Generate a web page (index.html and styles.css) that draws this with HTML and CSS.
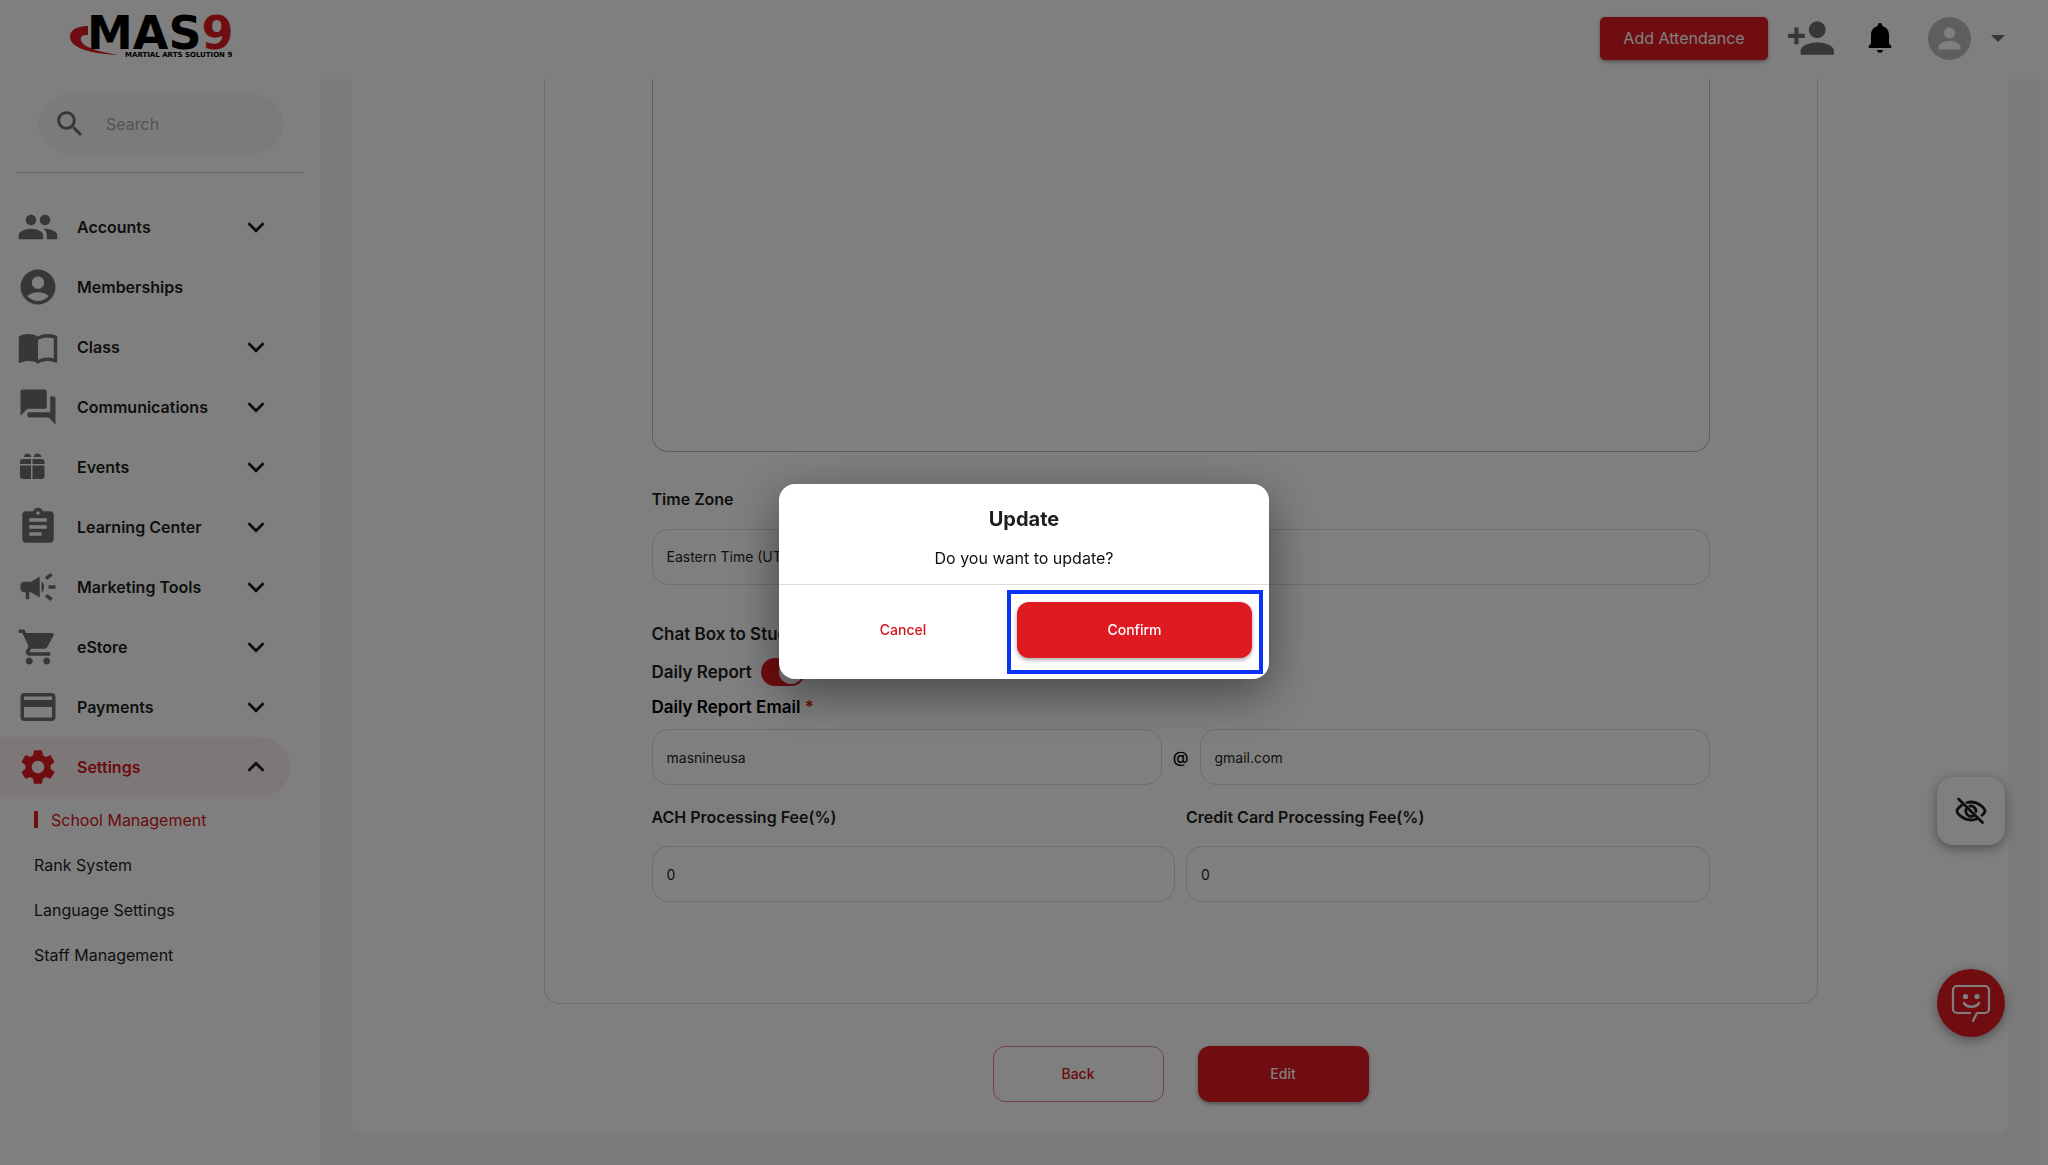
FILE: index.html
```html
<!DOCTYPE html>
<html lang="en">
<head>
<meta charset="utf-8">
<title>MAS9 – School Management</title>
<link rel="stylesheet" href="styles.css">
</head>
<body>
<header class="topbar">
  <a class="logo" href="#" aria-label="MAS9 home">
    <svg width="172" height="46" viewBox="0 0 172 46">
      <path class="logo-red" d="M21 11 C8 11 3 16 3 22 C3 32 22 39 52 40 C32 37 15 32 14 25 C13 21 16 20 21 20 Z"/>
      <text class="logo-word" x="20" y="34">MAS<tspan class="logo-red">9</tspan></text>
      <text class="logo-tag" x="58" y="42">MARTIAL ARTS SOLUTION 9</text>
    </svg>
  </a>
  <div class="actions">
    <button class="btn btn-attend" type="button">Add Attendance</button>
    <button class="icon-btn add-person" type="button" aria-label="Add person">
      <svg width="50" height="50" viewBox="0 0 24 24"><path d="M15 12c2.210 0 4-1.790 4-4s-1.790-4-4-4-4 1.790-4 4 1.790 4 4 4zm-9-2V7H4v3H1v2h3v3h2v-3h3v-2H6zm9 4c-2.670 0-8 1.340-8 4v2h16v-2c0-2.660-5.330-4-8-4z"/></svg>
    </button>
    <button class="icon-btn bell" type="button" aria-label="Notifications">
      <svg width="24" height="30" viewBox="0 0 24 30"><path d="M12 0a2.200 2.200 0 0 1 2.200 2.200v.8C18.500 4 21 7.500 21 12v7.500c0 1 .4 1.700 1.300 2.500.8.700 1.200 1.100 1.200 1.700 0 .8-.6 1.300-1.300 1.300H1.800C1.100 25 .5 24.500.5 23.700c0-.6.4-1 1.200-1.700C2.600 21.200 3 20.500 3 19.500V12c0-4.500 2.500-8 6.800-9v-.8A2.200 2.200 0 0 1 12 0zM9 27h6c0 1.600-1.300 2.700-3 2.700S9 28.600 9 27z"/></svg>
    </button>
    <button class="icon-btn account" type="button" aria-label="Account">
      <svg width="43" height="43" viewBox="0 0 43 43"><circle cx="21.500" cy="21.500" r="21.500" fill="#bdbdbd"/><circle cx="21.500" cy="16" r="5.500" fill="#fff"/><path d="M10.500 32.500v-2.700c0-4 7-5.800 11-5.800s11 1.800 11 5.800v2.700z" fill="#fff"/></svg>
      <svg width="14" height="7" viewBox="0 0 14 7"><path d="M0 0h14L7 7z"/></svg>
    </button>
  </div>
</header>

<nav class="sidebar">
  <label class="search">
    <svg width="34" height="34" viewBox="0 0 24 24"><path d="M15.500 14h-.79l-.28-.27C15.410 12.590 16 11.110 16 9.500 16 5.910 13.090 3 9.500 3S3 5.910 3 9.500 5.910 16 9.500 16c1.610 0 3.090-.59 4.230-1.570l.27.28v.79l5 4.990L20.490 19l-4.990-5zm-6 0C7.010 14 5 11.990 5 9.500S7.010 5 9.500 5 14 7.010 14 9.500 11.990 14 9.500 14z"/></svg>
    <input type="search" placeholder="Search" aria-label="Search">
  </label>
  <hr class="rule">
  <ul class="menu">
    <li><a class="item" href="#"><svg class="ico" viewBox="0 0 24 24"><path d="M16 11c1.660 0 2.990-1.340 2.990-3S17.660 5 16 5s-3 1.340-3 3 1.340 3 3 3zm-8 0c1.660 0 2.990-1.340 2.990-3S9.660 5 8 5 5 6.340 5 8s1.340 3 3 3zm0 2c-2.330 0-7 1.170-7 3.500V19h14v-2.500c0-2.330-4.670-3.500-7-3.500zm8 0c-.29 0-.62.020-.97.050 1.160.84 1.970 1.970 1.970 3.450V19h6v-2.500c0-2.330-4.670-3.500-7-3.500z"/></svg><span>Accounts</span><svg class="chev" viewBox="0 0 24 24"><path d="M16.590 8.590 12 13.170 7.410 8.590 6 10l6 6 6-6z"/></svg></a></li>
    <li><a class="item" href="#"><svg class="ico" viewBox="0 0 24 24"><path d="M12 2C6.480 2 2 6.480 2 12s4.480 10 10 10 10-4.480 10-10S17.520 2 12 2zm0 4c1.930 0 3.500 1.570 3.500 3.500S13.930 13 12 13s-3.500-1.570-3.500-3.500S10.070 6 12 6zm0 14c-2.030 0-4.430-.82-6.140-2.880C7.550 15.800 9.680 15 12 15s4.450.8 6.140 2.120C16.430 19.180 14.030 20 12 20z"/></svg><span>Memberships</span></a></li>
    <li><a class="item" href="#"><svg class="ico" viewBox="0 0 24 24"><path d="M21 5c-1.110-.35-2.330-.5-3.500-.5-1.950 0-4.050.4-5.500 1.500-1.450-1.100-3.550-1.500-5.500-1.500S2.450 4.900 1 6v14.650c0 .25.25.5.5.5.1 0 .15-.05.25-.05C3.100 20.450 5.050 20 6.500 20c1.950 0 4.050.4 5.500 1.500 1.350-.85 3.800-1.500 5.500-1.500 1.650 0 3.350.3 4.750 1.050.1.050.15.050.25.050.25 0 .5-.25.5-.5V6c-.6-.45-1.250-.75-2-1zm0 13.500c-1.100-.35-2.300-.5-3.500-.5-1.700 0-4.150.65-5.500 1.500V8c1.350-.85 3.800-1.500 5.500-1.500 1.200 0 2.400.15 3.500.5v11.500z"/></svg><span>Class</span><svg class="chev" viewBox="0 0 24 24"><path d="M16.590 8.590 12 13.170 7.410 8.590 6 10l6 6 6-6z"/></svg></a></li>
    <li><a class="item" href="#"><svg class="ico" viewBox="0 0 24 24"><path d="M21 6h-2v9H6v2c0 .55.45 1 1 1h11l4 4V7c0-.55-.45-1-1-1zm-4 6V3c0-.55-.45-1-1-1H3c-.55 0-1 .45-1 1v14l4-4h10c.55 0 1-.45 1-1z"/></svg><span>Communications</span><svg class="chev" viewBox="0 0 24 24"><path d="M16.590 8.590 12 13.170 7.410 8.590 6 10l6 6 6-6z"/></svg></a></li>
    <li><a class="item" href="#"><svg class="ico" viewBox="0 0 42 42"><path d="M3 18v-2a3 3 0 0 1 3-3h8v5zM15.500 18v-5h9a3 3 0 0 1 3 3v2zM3 19.500h11V33H6a3 3 0 0 1-3-3zM15.500 19.500h12V30a3 3 0 0 1-3 3h-9zM7 11c0-2 1.500-3.500 3.500-3.500S14 9 14.500 11zM16.500 11c.5-2 2-3.500 4-3.500S24 9 24.500 11z"/></svg><span>Events</span><svg class="chev" viewBox="0 0 24 24"><path d="M16.590 8.590 12 13.170 7.410 8.590 6 10l6 6 6-6z"/></svg></a></li>
    <li><a class="item" href="#"><svg class="ico" viewBox="0 0 24 24"><path d="M19 3h-4.180C14.400 1.840 13.300 1 12 1c-1.300 0-2.400.84-2.820 2H5c-1.100 0-2 .9-2 2v14c0 1.100.9 2 2 2h14c1.100 0 2-.9 2-2V5c0-1.100-.9-2-2-2zm-7 0c.55 0 1 .45 1 1s-.45 1-1 1-1-.45-1-1 .45-1 1-1zm2 14H7v-2h7v2zm3-4H7v-2h10v2zm0-4H7V7h10v2z"/></svg><span>Learning Center</span><svg class="chev" viewBox="0 0 24 24"><path d="M16.590 8.590 12 13.170 7.410 8.590 6 10l6 6 6-6z"/></svg></a></li>
    <li><a class="item" href="#"><svg class="ico" viewBox="0 0 24 24"><path d="M18 11v2h4v-2h-4zm-2 6.610c.96.710 2.210 1.650 3.200 2.390.4-.53.8-1.070 1.200-1.600-.99-.74-2.240-1.680-3.200-2.400-.4.540-.8 1.080-1.200 1.610zM20.400 5.600c-.4-.53-.8-1.070-1.200-1.600-.99.740-2.240 1.680-3.200 2.400.4.530.8 1.070 1.200 1.600.96-.72 2.210-1.650 3.200-2.400zM4 9c-1.100 0-2 .9-2 2v2c0 1.100.9 2 2 2h1v4h2v-4h1l5 3V6L8 9H4zm11.500 3c0-1.330-.58-2.530-1.500-3.350v6.690c.92-.81 1.500-2.010 1.500-3.340z"/></svg><span>Marketing Tools</span><svg class="chev" viewBox="0 0 24 24"><path d="M16.590 8.590 12 13.170 7.410 8.590 6 10l6 6 6-6z"/></svg></a></li>
    <li><a class="item" href="#"><svg class="ico" viewBox="0 0 24 24"><path d="M7 18c-1.100 0-1.990.9-1.990 2S5.900 22 7 22s2-.9 2-2-.9-2-2-2zM1 2v2h2l3.600 7.590-1.350 2.450c-.16.280-.25.610-.25.960 0 1.100.9 2 2 2h12v-2H7.420c-.14 0-.25-.11-.25-.25l.03-.12.9-1.630h7.450c.75 0 1.410-.41 1.750-1.030l3.580-6.490c.08-.14.12-.31.12-.48 0-.55-.45-1-1-1H5.210l-.94-2H1zm16 16c-1.100 0-1.990.9-1.990 2s.89 2 1.990 2 2-.9 2-2-.9-2-2-2z"/></svg><span>eStore</span><svg class="chev" viewBox="0 0 24 24"><path d="M16.590 8.590 12 13.170 7.410 8.590 6 10l6 6 6-6z"/></svg></a></li>
    <li><a class="item" href="#"><svg class="ico" viewBox="0 0 24 24"><path d="M20 4H4c-1.110 0-1.990.89-1.990 2L2 18c0 1.110.89 2 2 2h16c1.110 0 2-.89 2-2V6c0-1.110-.89-2-2-2zm0 14H4v-6h16v6zm0-10H4V6h16v2z"/></svg><span>Payments</span><svg class="chev" viewBox="0 0 24 24"><path d="M16.590 8.590 12 13.170 7.410 8.590 6 10l6 6 6-6z"/></svg></a></li>
    <li><a class="item active" href="#"><svg class="ico" viewBox="0 0 24 24"><path d="M19.140 12.940c.04-.3.060-.61.060-.94 0-.32-.02-.64-.07-.94l2.030-1.580c.18-.14.230-.41.120-.61l-1.920-3.320c-.12-.22-.37-.29-.59-.22l-2.390.96c-.5-.38-1.030-.7-1.620-.94l-.36-2.540c-.04-.24-.24-.41-.48-.41h-3.840c-.24 0-.43.170-.47.410l-.36 2.540c-.59.240-1.130.570-1.620.94l-2.390-.96c-.22-.08-.47 0-.59.220L2.740 8.870c-.12.210-.08.470.12.610l2.030 1.580c-.05.300-.09.630-.09.940s.02.640.07.940l-2.030 1.580c-.18.140-.23.410-.12.610l1.920 3.320c.12.220.37.290.59.220l2.390-.96c.5.380 1.030.7 1.620.94l.36 2.540c.05.240.24.410.48.410h3.840c.24 0 .44-.17.47-.41l.36-2.540c.59-.24 1.130-.56 1.620-.94l2.390.96c.22.080.47 0 .59-.22l1.920-3.320c.12-.22.070-.47-.12-.61l-2.010-1.580zM12 15.600c-1.980 0-3.600-1.620-3.600-3.600s1.620-3.600 3.600-3.600 3.600 1.620 3.600 3.600-1.620 3.600-3.600 3.600z"/></svg><span>Settings</span><svg class="chev" viewBox="0 0 24 24"><path d="M12 8l-6 6 1.410 1.410L12 10.830l4.590 4.580L18 14z"/></svg></a>
      <ul class="submenu">
        <li><a class="current" href="#">School Management</a></li>
        <li><a href="#">Rank System</a></li>
        <li><a href="#">Language Settings</a></li>
        <li><a href="#">Staff Management</a></li>
      </ul>
    </li>
  </ul>
</nav>

<main class="main">
  <form class="card">
    <div class="panel">
      <textarea class="notes" aria-label="Description"></textarea>
      <label class="label zone-label" for="zone">Time Zone</label>
      <select class="field" id="zone"><option>Eastern Time (UTC-05:00)</option></select>
      <div class="switches">
        <div class="switch-row"><label class="label large" for="chat">Chat Box to Students</label><input class="switch" type="checkbox" id="chat" checked></div>
        <div class="switch-row"><label class="label large" for="daily">Daily Report</label><input class="switch" type="checkbox" id="daily" checked></div>
      </div>
      <label class="label large strong" for="mail">Daily Report Email <span class="req">*</span></label>
      <div class="email">
        <input class="field" id="mail" type="text" value="masnineusa">
        <span class="at">@</span>
        <input class="field" type="text" value="gmail.com" aria-label="Email domain">
      </div>
      <div class="fees">
        <div><label class="label" for="ach">ACH Processing Fee(%)</label><input class="field" id="ach" type="text" value="0"></div>
        <div><label class="label" for="cc">Credit Card Processing Fee(%)</label><input class="field" id="cc" type="text" value="0"></div>
      </div>
    </div>
    <div class="buttons">
      <button class="btn btn-outline" type="button">Back</button>
      <button class="btn btn-solid" type="button">Edit</button>
    </div>
  </form>
</main>

<button class="fab eye" type="button" aria-label="Hide">
  <svg width="34" height="34" viewBox="0 0 34 34" fill="none" stroke="#1e1e1e" stroke-width="2.800" stroke-linecap="round"><path d="M4.500 5 28.500 28.500"/><path d="M7.500 11.500C4.800 13.300 3 16 3 17c0 2.500 6 9 14 9 2 0 4-.4 5.500-1M13 8.500c1.200-.3 2.600-.5 4-.5 8 0 14 6.500 14 9 0 1-1 2.600-3 4.300"/><path d="M12 15.500a5.300 5.300 0 0 0 7.500 6.200M16 12a5.300 5.300 0 0 1 6 5.500" stroke-width="2.800"/></svg>
</button>
<button class="fab chat" type="button" aria-label="Chat">
  <svg width="40" height="40" viewBox="0 0 40 40" fill="none" stroke="#fff" stroke-width="2.200" stroke-linecap="round" stroke-linejoin="round"><path d="M19 30H6a4 4 0 0 1-4-4V7a4 4 0 0 1 4-4h28a4 4 0 0 1 4 4v19a4 4 0 0 1-4 4h-8l-4 8"/><path d="M13 20c3 5 12 5 15 0" stroke-width="2.500"/><circle cx="14.500" cy="13.500" r="1.500" fill="#fff"/><circle cx="26" cy="13.500" r="1.500" fill="#fff"/></svg>
</button>

<div class="backdrop">
  <section class="modal" role="dialog" aria-modal="true" aria-labelledby="dlg-title">
    <div class="modal-body">
      <h2 id="dlg-title">Update</h2>
      <p>Do you want to update?</p>
    </div>
    <div class="modal-foot">
      <button class="btn btn-text" type="button">Cancel</button>
      <div class="marked"><button class="btn btn-solid" type="button">Confirm</button></div>
    </div>
  </section>
</div>
</body>
</html>
```
FILE: styles.css
```css
* { box-sizing: border-box; }

body {
  margin: 0;
  min-height: 100vh;
  display: grid;
  grid-template: 79px 1fr / 320px 1fr;
  background: #fff;
  color: #1e1e1e;
  font: 400 16px/24px Inter, "Liberation Sans", sans-serif;
}

button, input, select, textarea { font: inherit; color: inherit; }
button { cursor: pointer; }
a { color: inherit; text-decoration: none; }
ul { margin: 0; padding: 0; list-style: none; }

/* Top bar */
.topbar {
  grid-column: 1 / -1;
  display: flex;
  justify-content: space-between;
  align-items: center;
  padding: 0 43px 3px 67px;
}
.logo svg { display: block; overflow: visible; }
.logo-word { font: 700 46px "DejaVu Sans", sans-serif; fill: #000; }
.logo-tag { font: 700 7px "DejaVu Sans", sans-serif; fill: #000; }
.logo-red { fill: #dc1c24; }
.actions { display: flex; align-items: center; }

.btn {
  border: 0;
  border-radius: 12px;
  height: 56px;
  font-size: 14px;
  font-weight: 500;
}
.btn-solid, .btn-attend {
  background: #e01a22;
  color: #fff;
  box-shadow: 0 2px 4px rgba(0, 0, 0, .35);
}
.btn-attend {
  width: 168px;
  height: 43px;
  border-radius: 5px;
  font-size: 16px;
  font-weight: 400;
}
.btn-outline { background: none; border: 1px solid #e88286; color: #d6141c; }
.btn-text { background: none; color: #d6141c; }

.icon-btn {
  display: flex;
  align-items: center;
  padding: 0;
  border: 0;
  background: none;
  fill: #6f6f6f;
}
.add-person { margin-left: 18px; }
.bell { margin-left: 32px; fill: #000; }
.account { margin-left: 36px; gap: 20px; }

/* Sidebar */
.sidebar { padding-top: 15px; }
.search {
  display: flex;
  align-items: center;
  gap: 19px;
  height: 60px;
  margin: 0 37px 0 38px;
  padding: 0 15px;
  border-radius: 30px;
  background: #f7f7f7;
  fill: #6f6f6f;
}
.search svg { flex: none; }
.search input {
  width: 100%;
  min-width: 0;
  padding: 0;
  border: 0;
  outline: 0;
  background: none;
}
.search input::placeholder { color: #a6a6a6; opacity: 1; }
.rule {
  height: 1px;
  margin: 18px 17px 24px;
  border: 0;
  background: #c4c4c4;
}
.item {
  display: flex;
  align-items: center;
  gap: 18px;
  height: 60px;
  margin-right: 30px;
  padding: 0 17px;
  border-radius: 0 30px 30px 0;
  font-weight: 600;
}
.item span { flex: 1; }
.ico { width: 42px; height: 42px; fill: #6f6f6f; }
.chev { width: 34px; height: 34px; fill: #1e1e1e; }
.active { background: #fdeeee; color: #d6141c; }
.active .ico { fill: #e01a22; }
.submenu { padding-left: 34px; }
.submenu a {
  display: flex;
  align-items: center;
  height: 45px;
}
.submenu .current { color: #d6141c; }
.current::before {
  content: "";
  width: 4px;
  height: 17px;
  margin-right: 13px;
  background: #e01a22;
}

/* Content */
.main {
  margin-right: 7px;
  padding: 0 32px 32px;
  background: #f6f6f6;
}
.card {
  padding-bottom: 31px;
  border-radius: 0 0 12px 12px;
  background: #fff;
}
.panel {
  max-width: 1274px;
  margin: 0 auto;
  padding: 0 107px 101px;
  border: 1px solid #dcdcdc;
  border-top: 0;
  border-radius: 0 0 16px 16px;
}
.notes {
  display: block;
  width: 100%;
  height: 373px;
  border: 1px solid #bdbdbd;
  border-top: 0;
  border-radius: 0 0 16px 16px;
  background: none;
  resize: none;
}
.label { display: block; font-weight: 600; }
.large { font-size: 17px; }
.zone-label { margin: 35px 0 18px; }
.field {
  display: block;
  width: 100%;
  min-width: 0;
  height: 56px;
  padding: 0 14px;
  border: 1px solid #dcdcdc;
  border-radius: 16px;
  background: none;
  appearance: none;
  font-size: 14px;
}
.switches { margin: 35px 0 9px; display: grid; gap: 10px; }
.switch-row { display: flex; align-items: center; gap: 9px; }
.switch {
  appearance: none;
  width: 44px;
  height: 28px;
  margin: 0;
  padding: 2px;
  border-radius: 14px;
  background: #e01a22;
}
.switch::before {
  content: "";
  display: block;
  width: 24px;
  height: 24px;
  margin-left: auto;
  border-radius: 50%;
  background: #fff;
}
.strong { color: #000; }
.req { color: #e01a22; }
.email {
  display: grid;
  grid-template-columns: 1fr 38px 1fr;
  align-items: center;
  margin: 10px 0 20px;
}
.at { text-align: center; color: #000; font-weight: 500; }
.fees { display: grid; grid-template-columns: 1fr 1fr; gap: 11px; }
.fees .label { margin-bottom: 17px; }
.buttons { display: flex; justify-content: center; gap: 34px; margin-top: 42px; }
.buttons .btn { width: 171px; }

/* Floating buttons */
.fab {
  position: fixed;
  right: 43px;
  display: grid;
  place-items: center;
  width: 68px;
  height: 68px;
  padding: 0;
  border: 0;
  box-shadow: 0 3px 12px rgba(0, 0, 0, .4);
}
.chat {
  bottom: 128px;
  border-radius: 50%;
  background: #e01a22;
}
.eye {
  bottom: 320px;
  border-radius: 16px;
  background: #fff;
}

/* Dialog */
.backdrop {
  position: fixed;
  inset: 0;
  display: flex;
  align-items: center;
  justify-content: center;
  padding-bottom: 2px;
  background: rgba(0, 0, 0, .5);
}
.modal {
  width: 490px;
  border-radius: 16px;
  background: #fff;
  box-shadow: 0 14px 48px rgba(0, 0, 0, .45);
}
.modal-body {
  padding: 20px 16px 13px;
  border-bottom: 1px solid #dcdcdc;
  text-align: center;
}
.modal h2 { margin: 0 0 11px; font-size: 20px; line-height: 30px; font-weight: 700; }
.modal p { margin: 0; line-height: 26px; color: #111; }
.modal-foot {
  display: grid;
  grid-template-columns: 214fr 235fr;
  gap: 7px;
  padding: 17px 17px 21px;
}
.marked { position: relative; }
.marked .btn { width: 100%; }
.marked::after {
  content: "";
  position: absolute;
  inset: -12px -11px -16px -10px;
  border: 4px solid #0a33f5;
  pointer-events: none;
}
```
